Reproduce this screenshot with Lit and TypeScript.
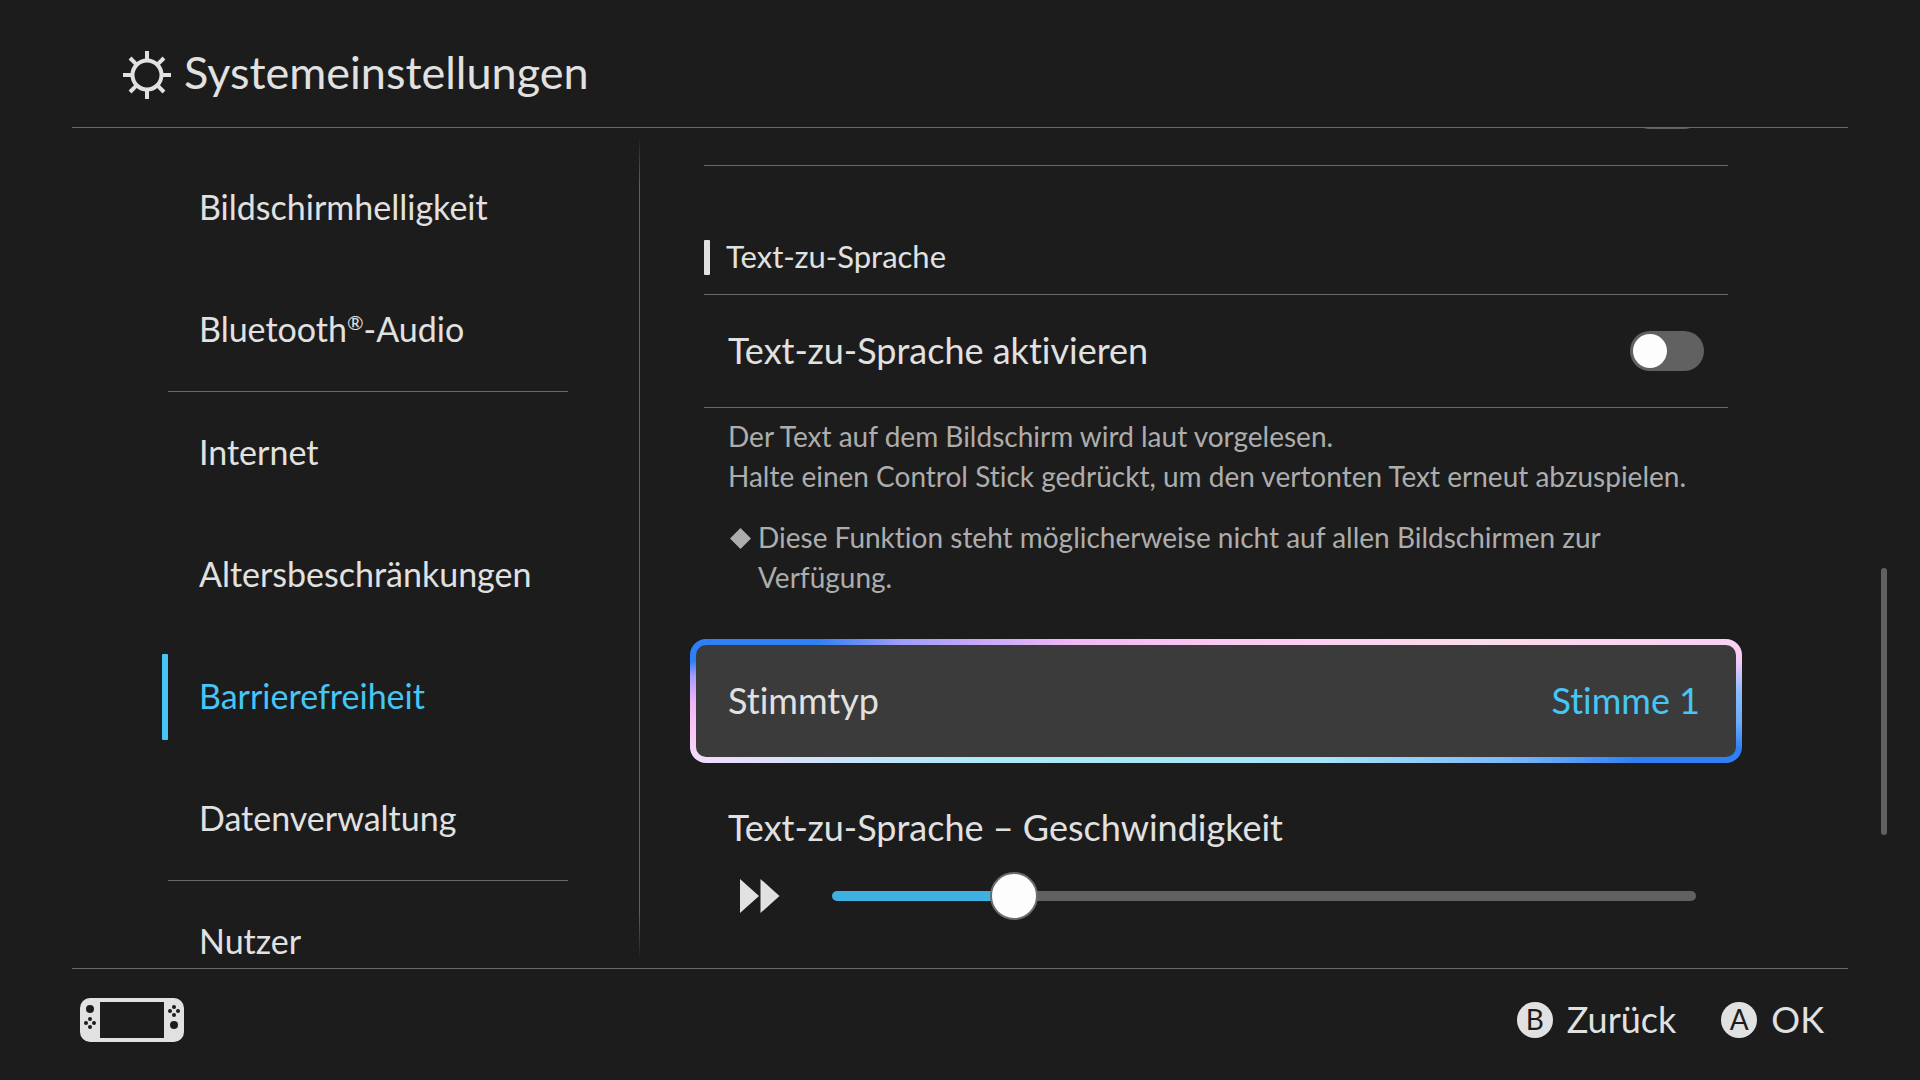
import { LitElement, html, css, svg, nothing } from "lit";
import { customElement, property, state } from "lit/decorators.js";
import { classMap } from "lit/directives/class-map.js";
import { styleMap } from "lit/directives/style-map.js";

interface NavEntry {
  id: string;
  label: unknown;
  endsGroup?: boolean;
}

const NAV: NavEntry[] = [
  { id: "brightness", label: "Bildschirmhelligkeit" },
  { id: "bluetooth", label: html`Bluetooth<sup class="mark">®</sup>-Audio`, endsGroup: true },
  { id: "internet", label: "Internet" },
  { id: "parental", label: "Altersbeschränkungen" },
  { id: "accessibility", label: "Barrierefreiheit" },
  { id: "data", label: "Datenverwaltung", endsGroup: true },
  { id: "users", label: "Nutzer" },
];

const SPEED_STEPS = 31;

@customElement("settings-nav")
class SettingsNav extends LitElement {
  @property() selected = "";

  static styles = css`
    :host {
      display: block;
      overflow: hidden;
    }
    .list {
      list-style: none;
      margin: 0;
      padding: 19px 71px 0 162px;
    }
    .group-end {
      padding-bottom: 1px;
      background: linear-gradient(#696969, #696969) 6px 100% / 100% 1px no-repeat;
    }
    .item {
      display: flex;
      align-items: center;
      gap: 31px;
      width: 100%;
      height: 122px;
      padding: 0;
      border: 0;
      background: none;
      color: inherit;
      font: inherit;
      font-size: 34px;
      font-variant-ligatures: none;
      line-height: 44px;
      text-align: left;
      white-space: nowrap;
      cursor: pointer;
    }
    .bar {
      width: 6px;
      height: 86px;
      border-radius: 1px;
    }
    .text {
      padding-bottom: 2px;
    }
    .mark {
      font-size: 20px;
      line-height: 0;
      vertical-align: 12px;
    }
    .current {
      color: #45c6f6;
    }
    .current .bar {
      background: #45c6f6;
    }
  `;

  render() {
    return html`<nav>
      <ul class="list">
        ${NAV.map(
          (n) => html`<li class=${classMap({ "group-end": !!n.endsGroup })}>
            <button
              class=${classMap({ item: true, current: n.id === this.selected })}
              aria-current=${n.id === this.selected ? "page" : nothing}
            >
              <span class="bar"></span><span class="text">${n.label}</span>
            </button>
          </li>`
        )}
      </ul>
    </nav>`;
  }
}

@customElement("speech-settings")
class SpeechSettings extends LitElement {
  @state() private enabled = false;
  @state() private speed = 6;

  static styles = css`
    :host {
      display: block;
      overflow: hidden;
      padding: 0 153px 0 64px;
    }
    .previous {
      display: flex;
      justify-content: flex-end;
      margin-top: -39px;
      padding: 0 24px 36px;
      border-bottom: 1px solid #696969;
    }
    .track {
      width: 74px;
      height: 40px;
      border-radius: 20px;
      background: #616161;
    }
    .heading {
      display: flex;
      align-items: center;
      gap: 16px;
      margin: 74px 0 0;
      padding-bottom: 19px;
      border-bottom: 1px solid #696969;
      font-size: 31px;
      font-weight: 400;
      line-height: 35px;
    }
    .heading::before {
      content: "";
      width: 6px;
      height: 35px;
      border-radius: 1px;
      background: #e1e1e1;
    }
    .heading-text {
      padding-bottom: 2px;
      line-height: 33px;
    }
    .row {
      display: flex;
      align-items: center;
      justify-content: space-between;
      height: 112px;
      padding: 0 24px;
      border-bottom: 1px solid #696969;
      font-size: 36px;
      line-height: 44px;
    }
    .text {
      padding-bottom: 2px;
    }
    .toggle {
      appearance: none;
      display: flex;
      align-items: center;
      width: 74px;
      height: 40px;
      margin: 0;
      padding: 0 3px;
      border-radius: 20px;
      background: #616161;
      cursor: pointer;
    }
    .toggle::before {
      content: "";
      width: 34px;
      height: 34px;
      border-radius: 50%;
      background: #fdfdfd;
    }
    .toggle:checked {
      justify-content: flex-end;
      background: #3fb0e2;
    }
    .help {
      padding: 8px 24px 0;
      color: #adadad;
      font-size: 28px;
      line-height: 40px;
    }
    .help p {
      margin: 0;
    }
    .help .note {
      display: flex;
      align-items: flex-start;
      gap: 6px;
      margin-top: 21px;
      padding-right: 64px;
    }
    .diamond {
      flex: none;
      width: 24px;
      height: 24px;
      margin-top: 9px;
      fill: #adadad;
    }
    .choice {
      display: flex;
      align-items: center;
      justify-content: space-between;
      box-sizing: border-box;
      width: calc(100% + 28px);
      height: 124px;
      margin: 42px -14px 0;
      padding: 0 36px 0 32px;
      border: 6px solid transparent;
      border-radius: 16px;
      background:
        linear-gradient(#3b3b3b, #3b3b3b) padding-box,
        linear-gradient(#2f80f6 18%, #a99cfb 30%, #eeb4f8 50%, #fbc2f7 70%, #f6d6fa 92%)
          left / 6px 100% no-repeat border-box,
        linear-gradient(#fbd2f2 8%, #f8c8f6 18%, #c4c2fa 30%, #86bdfb 44%, #6cabfa 68%, #2f80f6 88%)
          right / 6px 100% no-repeat border-box,
        linear-gradient(90deg, #2f80f6 12%, #9f9cfa 20%, #f0b8f6 36%, #fbc9f3 50%, #fbdcea 75%, #fad0f3 98%)
          top / 100% 50% no-repeat border-box,
        linear-gradient(90deg, #efdcfb 2%, #c8e4fa 15%, #aeeaf6 28%, #a6e4f8 60%, #7cb8f8 78%, #2f80f6 90%)
          bottom / 100% 50% no-repeat border-box;
      color: inherit;
      font: inherit;
      font-size: 36px;
      font-variant-ligatures: none;
      line-height: 44px;
      text-align: left;
      cursor: pointer;
    }
    .choice:focus {
      outline: none;
    }
    .value {
      color: #45c6f6;
    }
    .speed-label {
      display: block;
      margin-top: 42px;
      padding: 0 24px;
      font-size: 36px;
      line-height: 44px;
    }
    .speed {
      display: flex;
      align-items: center;
      gap: 52px;
      margin-top: 23px;
      padding: 0 32px 0 36px;
    }
    .forward {
      flex: none;
      width: 40px;
      height: 36px;
      fill: #e1e1e1;
    }
    .slider {
      appearance: none;
      flex: 1;
      min-width: 0;
      height: 48px;
      margin: 0;
      background: none;
      cursor: pointer;
    }
    .slider::-webkit-slider-runnable-track {
      height: 10px;
      border-radius: 5px;
      background: linear-gradient(#3fb0e2, #3fb0e2) left / var(--fill) 100% no-repeat #616161;
    }
    .slider::-webkit-slider-thumb {
      appearance: none;
      box-sizing: border-box;
      width: 48px;
      height: 48px;
      margin-top: -19px;
      border: 2px solid #6b6b6b;
      border-radius: 50%;
      background: #fdfdfd;
    }
  `;

  render() {
    const share = this.speed / SPEED_STEPS;
    return html`
      <div class="previous"><span class="track"></span></div>
      <h2 class="heading"><span class="heading-text">Text-zu-Sprache</span></h2>
      <div class="row">
        <label class="text" for="tts">Text-zu-Sprache aktivieren</label>
        <input
          class="toggle"
          id="tts"
          type="checkbox"
          role="switch"
          .checked=${this.enabled}
          @change=${(e: Event) => (this.enabled = (e.target as HTMLInputElement).checked)}
        />
      </div>
      <div class="help">
        <p>Der Text auf dem Bildschirm wird laut vorgelesen.</p>
        <p>Halte einen Control Stick gedrückt, um den vertonten Text erneut abzuspielen.</p>
        <p class="note">
          <svg class="diamond" viewBox="0 0 24 24" aria-hidden="true"><path d="M12.500 2 23 12.500 12.500 23 2 12.500z" /></svg>
          <span>Diese Funktion steht möglicherweise nicht auf allen Bildschirmen zur Verfügung.</span>
        </p>
      </div>
      <button class="choice">
        <span class="text">Stimmtyp</span><span class="text value">Stimme 1</span>
      </button>
      <label class="speed-label" for="speed">Text-zu-Sprache – Geschwindigkeit</label>
      <div class="speed">
        <svg class="forward" viewBox="0 0 40 36" aria-hidden="true">
          <path d="M0 1 19 18 0 35zM20.500 1 39.500 18 20.500 35z" />
        </svg>
        <input
          class="slider"
          id="speed"
          type="range"
          min="0"
          max=${SPEED_STEPS}
          .value=${String(this.speed)}
          style=${styleMap({ "--fill": `calc(24px + (100% - 48px) * ${share})` })}
          @input=${(e: Event) => (this.speed = Number((e.target as HTMLInputElement).value))}
        />
      </div>
    `;
  }
}

@customElement("app-root")
class AppRoot extends LitElement {
  static styles = css`
    :host {
      display: flex;
      flex-direction: column;
      height: 100vh;
      overflow: hidden;
      background: #1c1c1c;
      color: #e1e1e1;
      font-family: Lato, "Open Sans", sans-serif;
      font-variant-ligatures: none;
    }
    .header {
      display: flex;
      align-items: center;
      gap: 12px;
      margin: 0 72px;
      padding: 36px 50px 14px;
      border-bottom: 1px solid #696969;
    }
    .sun {
      width: 50px;
      height: 50px;
      fill: none;
      stroke: #e1e1e1;
      stroke-width: 4;
    }
    .title {
      margin: 0;
      padding-bottom: 5px;
      font-size: 45px;
      font-weight: 400;
      line-height: 72px;
    }
    .body {
      flex: 1;
      min-height: 0;
      display: grid;
      grid-template-columns: 639px 1px minmax(0, 1fr) auto;
      grid-template-rows: minmax(0, 1fr);
    }
    .divider {
      margin: 8px 0;
      background: linear-gradient(transparent, #606060 6%, #606060 94%, transparent);
    }
    .scroll {
      display: grid;
      grid-template-rows: 440fr 267fr 133fr;
      width: 6px;
      padding-right: 33px;
    }
    .thumb {
      grid-row: 2;
      border-radius: 3px;
      background: #616161;
    }
    .footer {
      display: flex;
      align-items: center;
      gap: 45px;
      margin: 0 72px;
      padding: 29px 24px 38px 8px;
      border-top: 1px solid #696969;
    }
    .console {
      width: 104px;
      height: 44px;
      margin-right: auto;
      fill: #e1e1e1;
    }
    .hole {
      fill: #1c1c1c;
    }
    .hint {
      display: flex;
      align-items: center;
      gap: 14px;
      padding: 0;
      border: 0;
      background: none;
      color: inherit;
      font: inherit;
      font-size: 36px;
      line-height: 40px;
      cursor: pointer;
    }
    .hint-text {
      padding-bottom: 2px;
    }
    .key {
      width: 36px;
      height: 36px;
      border-radius: 50%;
      background: #e1e1e1;
      color: #1c1c1c;
      font-size: 28px;
      line-height: 35px;
      text-align: center;
    }
  `;

  private hint(key: string, label: string) {
    return html`<button class="hint">
      <span class="key">${key}</span><span class="hint-text">${label}</span>
    </button>`;
  }

  render() {
    return html`
      <header class="header">
        <svg class="sun" viewBox="-25 -25 50 50" aria-hidden="true">
          <circle r="14.500" />
          ${[0, 45, 90, 135, 180, 225, 270, 315].map(
            (a) => svg`<path d="M0 -15V-24" transform="rotate(${a})" />`
          )}
        </svg>
        <h1 class="title">Systemeinstellungen</h1>
      </header>
      <div class="body">
        <settings-nav selected="accessibility"></settings-nav>
        <div class="divider"></div>
        <speech-settings></speech-settings>
        <div class="scroll"><div class="thumb"></div></div>
      </div>
      <footer class="footer">
        <svg class="console" viewBox="0 0 104 44" aria-hidden="true">
          <rect width="104" height="44" rx="10" />
          <g class="hole">
            <rect x="20" y="4" width="64" height="36" />
            <circle cx="10" cy="11" r="4" />
            <circle cx="10" cy="21" r="2" />
            <circle cx="6" cy="25" r="2" />
            <circle cx="14" cy="25" r="2" />
            <circle cx="10" cy="29" r="2" />
            <circle cx="94" cy="9" r="2" />
            <circle cx="90" cy="13" r="2" />
            <circle cx="98" cy="13" r="2" />
            <circle cx="94" cy="17" r="2" />
            <circle cx="94" cy="27" r="4" />
          </g>
        </svg>
        ${this.hint("B", "Zurück")}${this.hint("A", "OK")}
      </footer>
    `;
  }
}
